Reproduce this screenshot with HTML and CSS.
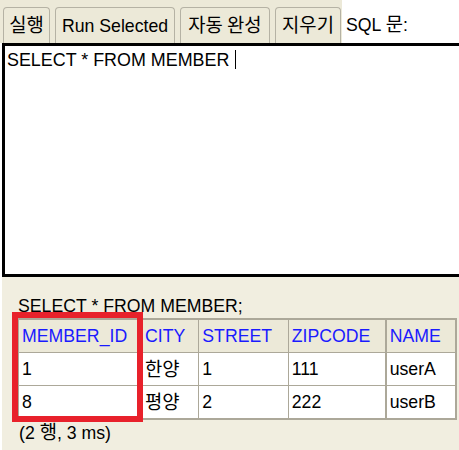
FILE: index.html
```html
<!DOCTYPE html>
<html>
<head>
<meta charset="utf-8">
<link rel="stylesheet" href="styles.css">
</head>
<body>
<div class="toolbar">
  <div class="buttons">
    <button class="btn b-run"><span class="ko">실행</span></button>
    <button class="btn b-sel">Run Selected</button>
    <button class="btn b-auto"><span class="ko">자동 완성</span></button>
    <button class="btn b-clear"><span class="ko">지우기</span></button>
  </div>
  <div class="label">SQL <span class="ko">문</span>:</div>
</div>
<div class="main">
  <div class="editor">SELECT * FROM MEMBER<span class="caret"></span></div>
  <div class="result">
    <div class="query">SELECT * FROM MEMBER;</div>
    <table class="grid">
      <colgroup>
        <col class="c1"><col class="c2"><col class="c3"><col class="c4"><col class="c5">
      </colgroup>
      <thead>
        <tr><th>MEMBER_ID</th><th>CITY</th><th>STREET</th><th>ZIPCODE</th><th>NAME</th></tr>
      </thead>
      <tbody>
        <tr><td>1</td><td><span class="ko">한양</span></td><td>1</td><td>111</td><td>userA</td></tr>
        <tr><td>8</td><td><span class="ko">평양</span></td><td>2</td><td>222</td><td>userB</td></tr>
      </tbody>
    </table>
    <div class="status">(2 <span class="ko">행</span>, 3 ms)</div>
    <div class="highlight"></div>
  </div>
</div>
</body>
</html>
```
FILE: styles.css
```css
html, body {
  margin: 0;
  padding: 0;
  background: #ffffff;
  font-family: "Liberation Sans", Arial, "Noto Sans CJK KR", sans-serif;
  font-size: 17.7px;
  color: #000;
  overflow: hidden;
}

.ko {
  font-family: "Noto Sans CJK KR", sans-serif;
  font-size: 18.8px;
  line-height: 1;
}

.toolbar {
  display: flex;
  height: 43px;
  background: #ffffff;
}

.buttons {
  display: flex;
  gap: 5px;
  padding: 7px 1px 0 3px;
  background: #ece9d8;
}

.btn {
  font: inherit;
  color: #000;
  height: 36px;
  padding: 0;
  margin: 0;
  text-align: center;
  background: #ece9d8;
  border: 1px solid #b5b2a4;
  border-radius: 4px;
  border-bottom-left-radius: 0;
  border-bottom-right-radius: 0;
  border-bottom: none;
  line-height: 34px;
  white-space: nowrap;
}

.b-run { width: 47px; }
.b-sel { width: 120px; }
.b-auto { width: 90px; }
.b-clear { width: 66px; }

.label {
  flex: 1;
  margin-top: 5px;
  padding: 9px 0 0 4px;
  background: #ffffff;
}

.main {
  padding-left: 2px;
}

.editor {
  border: 3px solid #000;
  border-right: none;
  padding: 4px 2px;
  line-height: 20px;
  font-size: 17.9px;
  box-sizing: content-box;
  height: 220px;
}

.caret {
  display: inline-block;
  width: 1px;
  height: 19px;
  background: #000;
  margin-left: 6px;
  vertical-align: -3px;
}

.result {
  position: relative;
  background: #f1eee0;
  height: 173px;
  padding: 18px 0 0 15px;
  box-sizing: border-box;
}

.query {
  line-height: 22px;
  margin-left: 1px;
  margin-bottom: 1px;
}

.grid {
  border-collapse: collapse;
  table-layout: fixed;
  width: 440px;
  border: 2px solid #aca899;
  background: #ffffff;
}

.c1 { width: 123px; }
.c2 { width: 57px; }
.c3 { width: 89px; }
.c4 { width: 97px; }
.c5 { width: 70px; }

.grid th, .grid td {
  border: 1px solid #aca899;
  padding: 0 3px;
  height: 32px;
  line-height: 20px;
  text-align: left;
  font-weight: normal;
  white-space: nowrap;
}

.grid th {
  background: #ece9d8;
  color: #1a1aff;
}

.grid td:nth-child(4), .grid th:nth-child(4) {
  border-right-width: 2px;
}

.status {
  margin-top: 2px;
  margin-left: 2px;
  line-height: 22px;
}

.highlight {
  position: absolute;
  left: 10px;
  top: 35px;
  width: 119px;
  height: 98px;
  border: 6px solid #e8212b;
}
```
